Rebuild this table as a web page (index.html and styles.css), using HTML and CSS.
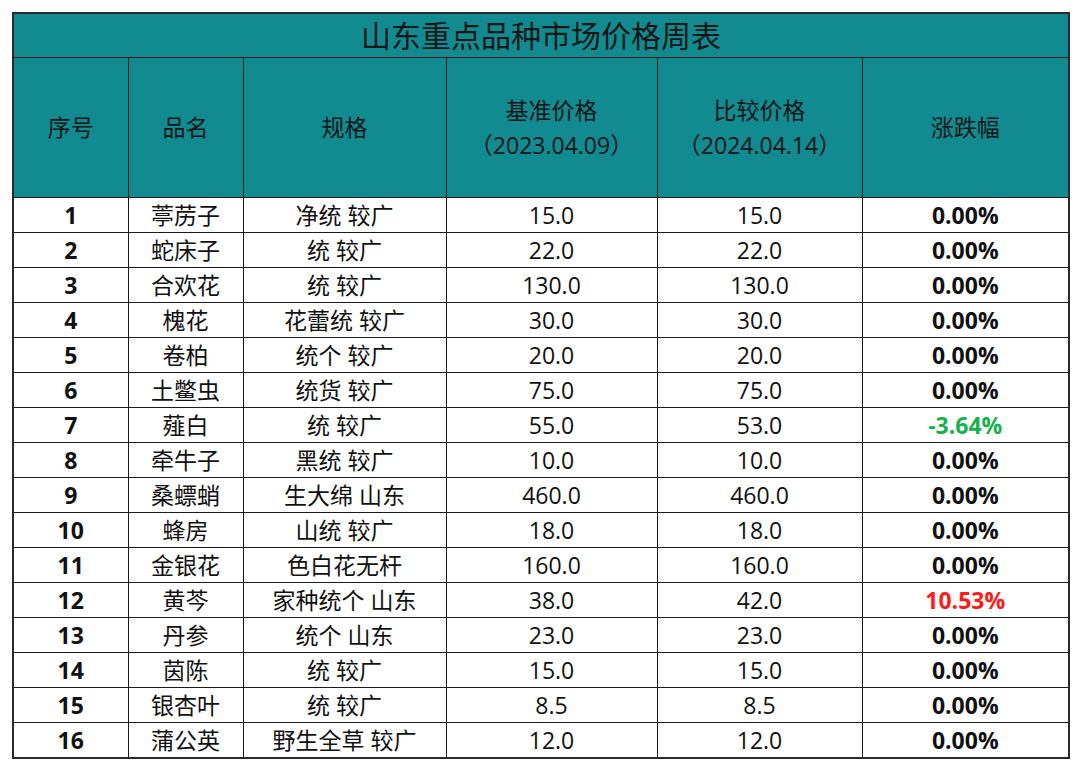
FILE: index.html
```html
<!DOCTYPE html>
<html lang="zh-CN">
<head>
<meta charset="utf-8">
<title>山东重点品种市场价格周表</title>
<link rel="stylesheet" href="styles.css">
</head>
<body>
<table class="price-table">
  <colgroup>
    <col class="c-no"><col class="c-name"><col class="c-spec"><col class="c-base"><col class="c-cmp"><col class="c-chg">
  </colgroup>
  <thead>
    <tr class="title-row"><th colspan="6">山东重点品种市场价格周表</th></tr>
    <tr class="head-row">
      <th>序号</th>
      <th>品名</th>
      <th>规格</th>
      <th>基准价格<br>（2023.04.09）</th>
      <th>比较价格<br>（2024.04.14）</th>
      <th>涨跌幅</th>
    </tr>
  </thead>
  <tbody>
    <tr><td class="no">1</td><td>葶苈子</td><td>净统 较广</td><td>15.0</td><td>15.0</td><td class="chg">0.00%</td></tr>
    <tr><td class="no">2</td><td>蛇床子</td><td>统 较广</td><td>22.0</td><td>22.0</td><td class="chg">0.00%</td></tr>
    <tr><td class="no">3</td><td>合欢花</td><td>统 较广</td><td>130.0</td><td>130.0</td><td class="chg">0.00%</td></tr>
    <tr><td class="no">4</td><td>槐花</td><td>花蕾统 较广</td><td>30.0</td><td>30.0</td><td class="chg">0.00%</td></tr>
    <tr><td class="no">5</td><td>卷柏</td><td>统个 较广</td><td>20.0</td><td>20.0</td><td class="chg">0.00%</td></tr>
    <tr><td class="no">6</td><td>土鳖虫</td><td>统货 较广</td><td>75.0</td><td>75.0</td><td class="chg">0.00%</td></tr>
    <tr><td class="no">7</td><td>薤白</td><td>统 较广</td><td>55.0</td><td>53.0</td><td class="chg down">-3.64%</td></tr>
    <tr><td class="no">8</td><td>牵牛子</td><td>黑统 较广</td><td>10.0</td><td>10.0</td><td class="chg">0.00%</td></tr>
    <tr><td class="no">9</td><td>桑螵蛸</td><td>生大绵 山东</td><td>460.0</td><td>460.0</td><td class="chg">0.00%</td></tr>
    <tr><td class="no">10</td><td>蜂房</td><td>山统 较广</td><td>18.0</td><td>18.0</td><td class="chg">0.00%</td></tr>
    <tr><td class="no">11</td><td>金银花</td><td>色白花无杆</td><td>160.0</td><td>160.0</td><td class="chg">0.00%</td></tr>
    <tr><td class="no">12</td><td>黄芩</td><td>家种统个 山东</td><td>38.0</td><td>42.0</td><td class="chg up">10.53%</td></tr>
    <tr><td class="no">13</td><td>丹参</td><td>统个 山东</td><td>23.0</td><td>23.0</td><td class="chg">0.00%</td></tr>
    <tr><td class="no">14</td><td>茵陈</td><td>统 较广</td><td>15.0</td><td>15.0</td><td class="chg">0.00%</td></tr>
    <tr><td class="no">15</td><td>银杏叶</td><td>统 较广</td><td>8.5</td><td>8.5</td><td class="chg">0.00%</td></tr>
    <tr><td class="no">16</td><td>蒲公英</td><td>野生全草 较广</td><td>12.0</td><td>12.0</td><td class="chg">0.00%</td></tr>
  </tbody>
</table>
</body>
</html>
```

FILE: styles.css
```css
html, body {
  margin: 0;
  background: #ffffff;
}
body {
  padding: 12px 0 0 12px;
  font-family: "Open Sans", "Noto Sans CJK SC", sans-serif;
  color: #111111;
}
.price-table {
  border-collapse: collapse;
  table-layout: fixed;
  width: 1056px;
  border: 2px solid #2a2a2a;
}
.c-no { width: 115px; }
.c-name { width: 115px; }
.c-spec { width: 203px; }
.c-base { width: 211px; }
.c-cmp { width: 205px; }
.c-chg { width: 207px; }

.price-table th,
.price-table td {
  border: 1px solid #1a1a1a;
  text-align: center;
  vertical-align: middle;
  padding: 0;
}
.price-table th {
  background: #118a90;
  color: #161616;
  font-weight: normal;
}
.title-row th {
  height: 43px;
  font-size: 30px;
  line-height: 43px;
}
.head-row th {
  height: 139px;
  font-size: 23px;
  line-height: 35px;
}
.price-table td {
  height: 34px;
  font-size: 23px;
  line-height: 34px;
}
.price-table td.no,
.price-table td.chg {
  font-weight: bold;
}
.price-table td.down { color: #16b04c; }
.price-table td.up { color: #ff1a1a; }
```
